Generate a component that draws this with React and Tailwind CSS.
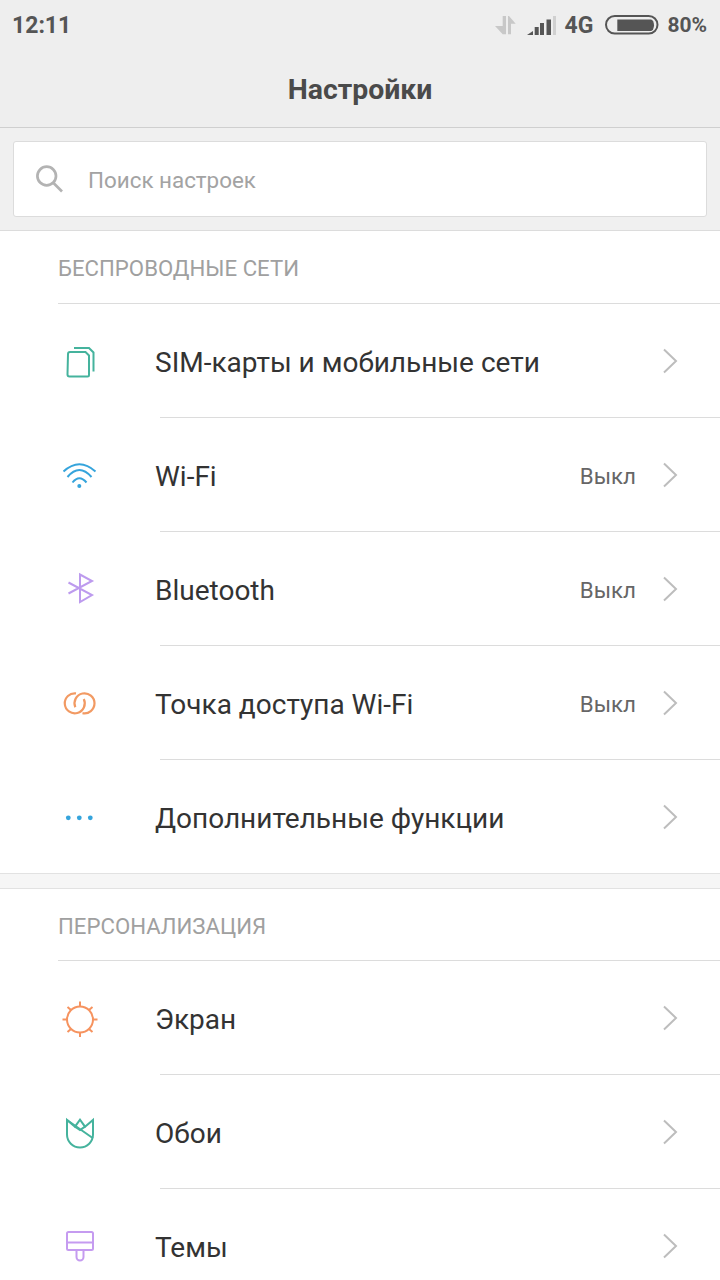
const SimIcon = () => (
    <svg width="40" height="40" viewBox="0 0 40 40" fill="none" stroke="#45b39d" strokeWidth="2">
        <path d="M9 13a2 2 0 0 1 2-2h15.500l3.500 3.500v19.500a1.500 1.500 0 0 1-1.500 1.500h-18a2 2 0 0 1-2-2z" />
        <path d="M15 7h15l4.500 4.500v19" />
    </svg>
);

const WifiIcon = () => (
    <svg width="40" height="40" viewBox="0 0 40 40" fill="none" stroke="#35a4dc" strokeWidth="2">
        <path d="M4.500 16.500Q20.300 2 36.500 16.500" />
        <path d="M8.500 22Q20.300 8 32.500 22" />
        <path d="M13.500 27.500Q20.300 19 27.500 27.500" />
        <circle cx="20.300" cy="31" r="2" fill="#35a4dc" stroke="none" />
    </svg>
);

const BluetoothIcon = () => (
    <svg width="40" height="40" viewBox="0 0 40 40" fill="none" stroke="#bd9bee" strokeWidth="2">
        <path d="M9.500 13.500L33 26 21 33V5.500L33 12 9.500 24.500" />
    </svg>
);

const HotspotIcon = () => (
    <svg width="40" height="40" viewBox="0 0 40 40" fill="none" stroke="#f29a63" strokeWidth="2.200">
        <path d="M17 10.400A10 10 0 1 0 24.800 16" />
        <path d="M16.300 24.200A10 10 0 1 1 23.500 30.100" />
    </svg>
);

const DotsIcon = () => (
    <svg width="40" height="40" viewBox="0 0 40 40" fill="#35a4dc">
        <circle cx="9.300" cy="20.800" r="2.400" />
        <circle cx="20.300" cy="20.800" r="2.400" />
        <circle cx="31.300" cy="20.800" r="2.400" />
    </svg>
);

const SunIcon = () => (
    <svg width="40" height="40" viewBox="0 0 40 40" fill="none" stroke="#f6935f" strokeWidth="2">
        <circle cx="21" cy="21.500" r="13" />
        <path d="M21 3.500v4.500M21 35v4M3.500 21.500h4.500M34 21.500h4.500M8.500 9l3.500 3M33.500 9l-3.500 3M8.500 34l3.500-3M33.500 34l-3.500-3" />
    </svg>
);

const WallpaperIcon = () => (
    <svg width="40" height="40" viewBox="0 0 40 40" fill="none" stroke="#45b39d" strokeWidth="2">
        <path d="M8 8v14.500a13 13 0 0 0 26 0V8l-8 6.700-5-7-5 7z" />
        <path d="M8 8l26 18.300M16 14.700l5 3.300 5-3.300" />
    </svg>
);

const ThemesIcon = () => (
    <svg width="40" height="40" viewBox="0 0 40 40" fill="none" stroke="#c59bf0" strokeWidth="2">
        <rect x="8" y="6" width="26" height="18" rx="1.500" />
        <path d="M8 16.500h26" />
        <path d="M17.500 24v7a3.500 3.500 0 0 0 7 0v-7" />
    </svg>
);

const Chevron = () => (
    <svg width="18" height="26" viewBox="0 0 18 26" fill="none" stroke="#bdbdbd" strokeWidth="2" className="shrink-0">
        <path d="M3 1.500l12 11.500-12 11.500" />
    </svg>
);

const SearchIcon = () => (
    <svg width="30" height="30" viewBox="0 0 30 30" fill="none" stroke="#b3b3b3" strokeWidth="2.700">
        <circle cx="10.700" cy="12" r="9.300" />
        <path d="M17.500 19l8.500 8.500" />
    </svg>
);

const Row = ({ icon, title, value, last }) => (
    <div className={`flex items-stretch ${last ? "h-[113px]" : "h-[114px]"}`}>
        <div className="flex w-[160px] shrink-0 items-center pl-[59px]">{icon}</div>
        <div className={`flex flex-1 items-center pr-[41px] ${last ? "" : "border-b border-[#dcdcdc]"}`}>
            <span className="ml-[-5px] flex-1 pt-[4px] text-[28px] text-[#333333]">{title}</span>
            {value && <span className="mr-[25px] pt-[4px] text-[22.300px] text-[#666666]">{value}</span>}
            <Chevron />
        </div>
    </div>
);

const SectionTitle = ({ children, height }) => (
    <div className={`ml-[58px] flex items-center border-b border-[#dcdcdc] pt-[4px] text-[22.200px] text-[#a0a0a0] ${height}`}>
        {children}
    </div>
);

export default function App() {
    return (
        <div className="h-[1280px] w-[720px] overflow-hidden bg-white font-['Roboto',sans-serif]">
            <div className="h-[128px] border-b border-[#cfcfcf] bg-[#eeeeee]">
                <div className="flex h-[50px] items-center justify-between pl-[12px] pr-[13px] font-bold text-[#555555]">
                    <span className="pt-[2px] text-[23px]">12:11</span>
                    <div className="flex items-center">
                        <svg width="21" height="19" viewBox="0 0 21 19" fill="#c8c8c8">
                            <path d="M7.700 0H11v18.300H7.700L0 10h7.700z" />
                            <path d="M13 0h1l6.700 7.700H16v10.600h-3z" />
                        </svg>
                        <svg width="29" height="19" viewBox="0 0 29 19" fill="#555555" className="ml-[11px]">
                            <path d="M0 19l6-4v4zM7.700 11h4v8h-4zM13 7h4v12h-4zM19.500 3.500H24V19h-4.500z" />
                            <path d="M26 0h3v19h-3z" fill="#d0d0d0" />
                        </svg>
                        <span className="ml-[9px] pt-[2px] text-[23px]">4G</span>
                        <svg width="54" height="20" viewBox="0 0 54 20" fill="none" className="ml-[12px]">
                            <rect x="1" y="1" width="51.500" height="17.500" rx="8.750" stroke="#555555" strokeWidth="2" />
                            <path d="M12.300 4.500H46a3 5.700 0 0 1 3 5.700 3 5.700 0 0 1-3 5.700H12.300z" fill="#555555" />
                        </svg>
                        <span className="ml-[8px] pt-[2px] text-[21px]">80%</span>
                    </div>
                </div>
                <div className="flex h-[77px] items-center justify-center pt-[4px] text-[28.400px] font-bold text-[#4a4a4a]">
                    Настройки
                </div>
            </div>

            <div className="flex h-[103px] items-start border-b border-[#dcdcdc] bg-[#f0f0f0] px-[13px] pt-[13px]">
                <div className="flex h-[76px] w-full items-center rounded-[3px] border border-[#dcdcdc] bg-white pl-[22px]">
                    <SearchIcon />
                    <span className="ml-[22px] pt-[4px] text-[22.400px] text-[#a3a3a3]">Поиск настроек</span>
                </div>
            </div>

            <SectionTitle height="h-[73px]">БЕСПРОВОДНЫЕ СЕТИ</SectionTitle>
            <Row icon={<SimIcon />} title="SIM-карты и мобильные сети" />
            <Row icon={<WifiIcon />} title="Wi-Fi" value="Выкл" />
            <Row icon={<BluetoothIcon />} title="Bluetooth" value="Выкл" />
            <Row icon={<HotspotIcon />} title="Точка доступа Wi-Fi" value="Выкл" />
            <Row icon={<DotsIcon />} title="Дополнительные функции" last />

            <div className="h-[16px] border-y border-[#e2e2e2] bg-[#f6f6f6]" />

            <SectionTitle height="h-[72px]">ПЕРСОНАЛИЗАЦИЯ</SectionTitle>
            <Row icon={<SunIcon />} title="Экран" />
            <Row icon={<WallpaperIcon />} title="Обои" />
            <Row icon={<ThemesIcon />} title="Темы" />
        </div>
    );
}
